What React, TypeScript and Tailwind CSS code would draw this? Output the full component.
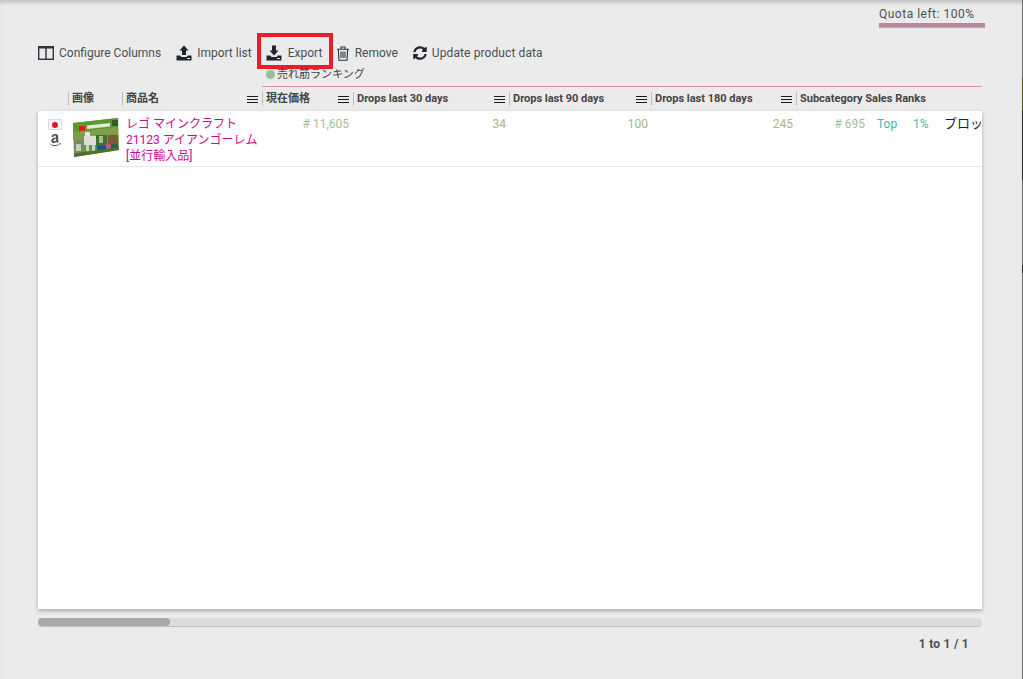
import type { ReactNode } from 'react';
import { FaAmazon, FaSyncAlt } from 'react-icons/fa';

const font = "font-['Roboto','Noto_Sans_CJK_JP',sans-serif]";

function ColumnsIcon() {
  return (
    <svg width="16" height="14" viewBox="0 0 16 14" fill="none" stroke="#2b3440" strokeWidth="1.4">
      <rect x="0.7" y="0.7" width="14.6" height="12.6" />
      <path d="M8 1v12M1 1.8h14" />
    </svg>
  );
}

function UploadIcon() {
  return (
    <svg width="16" height="16" viewBox="0 0 16 16" fill="#20262e">
      <path d="M8 0.5 12.5 5.5H10V10H6V5.5H3.5Z" />
      <path d="M0.5 10.5h3.8l1.2 1.5h5l1.2-1.5h3.8v5h-15Z" />
      <rect x="11" y="13" width="3" height="1" fill="#ebebeb" />
    </svg>
  );
}

function DownloadIcon() {
  return (
    <svg width="16" height="16" viewBox="0 0 16 16" fill="#20262e">
      <path d="M6 0.5h4V5.5h2.5L8 10.5 3.5 5.5H6Z" />
      <path d="M0.5 10.5h3.8l1.2 1.5h5l1.2-1.5h3.8v5h-15Z" />
      <rect x="11" y="13" width="3" height="1" fill="#ebebeb" />
    </svg>
  );
}

function TrashIcon() {
  return (
    <svg width="14" height="15" viewBox="0 0 14 15" fill="none" stroke="#2b3440" strokeWidth="1.1">
      <path d="M1 3.2h12M2.3 3.2l.6 11h8.2l.6-11M5 3V1h4v2" />
      <path d="M5 5.5v6.5M7 5.5v6.5M9 5.5v6.5" />
    </svg>
  );
}

function MenuIcon() {
  return (
    <svg width="11" height="9" viewBox="0 0 11 9" fill="none" stroke="#1c1c1c" strokeWidth="1">
      <path d="M0 1.5h11M0 4.5h11M0 7.5h11" />
    </svg>
  );
}

function LegoBox() {
  return (
    <svg width="48" height="42" viewBox="0 0 48 42">
      <path d="M1 5 46 0 47 32 2 39Z" fill="#6b9a33" />
      <path d="M1 5 46 0 46 9 1 14Z" fill="#5a9a2e" />
      <rect x="7" y="8" width="6" height="6" fill="#d3221c" />
      <path d="M15 7.5 38 5v3.5L15 11Z" fill="#e3ead8" />
      <rect x="40" y="2" width="6" height="6" fill="#2a5f27" />
      <path d="M1 14 46 9 46 17 1 22Z" fill="#7d9f4a" />
      <path d="M2 22h9v14l-9 2Z" fill="#7b8a5e" />
      <path d="M4 26h5v7H4Z" fill="#c9cdbf" />
      <path d="M13 14h5v5h-5Z" fill="#e6e6dc" />
      <path d="M12 18h12v9H12Z" fill="#dcddd2" />
      <path d="M14 27h3v6h-3ZM20 27h3v6h-3Z" fill="#cfd0c4" />
      <path d="M24 17h11v12H24Z" fill="#3f6e35" />
      <path d="M27 18h4v7h-4Z" fill="#a7c47a" />
      <path d="M25 28h9v6h-9Z" fill="#23508c" />
      <path d="M36 17h10v9H36Z" fill="#7a5b37" />
      <path d="M34 26h5v4h-5Z" fill="#b65a86" />
      <path d="M39 26h7v5h-7Z" fill="#2f5f48" />
      <path d="M2 35.5 47 29 47 32 2 39Z" fill="#4d7229" />
    </svg>
  );
}

function Tool({ icon, label, boxed, wide }: { icon: ReactNode; label: string; boxed?: boolean; wide?: boolean }) {
  return (
    <div
      className={
        boxed
          ? 'flex items-center gap-[6px] h-[36px] w-[76px] pl-[5px] pt-[4px] border-4 border-[#ed1c24] shrink-0'
          : 'flex items-center gap-[5px] h-[36px] pt-[4px] shrink-0'
      }
    >
      {icon}
      <span className={wide ? 'text-[12px] tracking-[0.1px] text-[#4a4f55] whitespace-nowrap' : 'text-[12px] text-[#4a4f55] whitespace-nowrap'}>
        {label}
      </span>
    </div>
  );
}

function HeaderCell({ label, width, menu }: { label: string; width: string; menu?: boolean }) {
  return (
    <div className={`${width} flex items-center h-[14px] border-l border-[#bdbdbd] pl-[3px] pr-[4px] shrink-0`}>
      <span className="flex-1 text-[11px] font-bold text-[#444] whitespace-nowrap">{label}</span>
      {menu && <MenuIcon />}
    </div>
  );
}

export default function App() {
  return (
    <div className={`${font} w-[1023px] h-[679px] overflow-hidden flex`}>
      <div className="w-[1022px] h-[679px] bg-[#ebebeb] flex flex-col shrink-0 shadow-[inset_0_5px_5px_-3px_rgba(0,0,0,0.22)]">
        <div className="flex justify-end pr-[37px] pt-[7px] h-[33px] shrink-0">
          <div className="w-[106px]">
            <div className="h-[16px] text-[12px] leading-[15px] tracking-[0.5px] text-[#4a4f55] whitespace-nowrap">Quota left: 100%</div>
            <div className="h-[4px] bg-[#b8879c] shadow-[0_1px_1px_rgba(0,0,0,0.25)]" />
          </div>
        </div>

        <div className="flex items-center pl-[38px] h-[36px] shrink-0">
          <Tool icon={<ColumnsIcon />} label="Configure Columns" />
          <div className="w-[15px]" />
          <Tool icon={<UploadIcon />} label="Import list" />
          <div className="w-[5px]" />
          <Tool icon={<DownloadIcon />} label="Export" boxed />
          <div className="w-[3px]" />
          <Tool icon={<TrashIcon />} label="Remove" />
          <div className="w-[15px]" />
          <Tool icon={<FaSyncAlt size={14} color="#20262e" />} label="Update product data" wide />
        </div>

        <div className="ml-[262px] mr-[40px] h-[18px] flex items-start gap-[2px] pl-[4px] border-b border-[#e58ab0] shrink-0">
          <span className="w-[9px] h-[9px] mt-[1px] rounded-full bg-[#95c199]" />
          <span className="text-[11px] leading-[12px] text-[#444] whitespace-nowrap">売れ筋ランキング</span>
        </div>

        <div className="flex items-center pl-[68px] h-[24px] shrink-0">
          <HeaderCell label="画像" width="w-[54px]" />
          <HeaderCell label="商品名" width="w-[140px]" menu />
          <HeaderCell label="現在価格" width="w-[91px]" menu />
          <HeaderCell label="Drops last 30 days" width="w-[156px]" menu />
          <HeaderCell label="Drops last 90 days" width="w-[142px]" menu />
          <HeaderCell label="Drops last 180 days" width="w-[145px]" menu />
          <HeaderCell label="Subcategory Sales Ranks" width="w-[186px]" />
        </div>

        <div className="mx-[38px] w-[944px] h-[498px] bg-white shadow-[0_2px_4px_rgba(0,0,0,0.28)] shrink-0 overflow-hidden">
          <div className="flex h-[56px] border-b border-[#e8e8e8] text-[12px] leading-[16px]">
            <div className="w-[34px] pl-[10px] pt-[8px] flex flex-col items-start shrink-0">
              <div className="w-[14px] h-[11px] bg-[#f6f6f6] border border-[#ddd] flex items-center justify-center">
                <span className="w-[6px] h-[6px] rounded-full bg-[#e8112d]" />
              </div>
              <FaAmazon size={14} color="#555" className="mt-[3px]" />
            </div>
            <div className="w-[54px] pt-[7px] shrink-0">
              <LegoBox />
            </div>
            <div className="w-[136px] pt-[5px] shrink-0 text-[#cc0a8c] whitespace-nowrap">
              <div>レゴ マインクラフト</div>
              <div>21123 アイアンゴーレム</div>
              <div>[並行輸入品]</div>
            </div>
            <div className="w-[92px] pt-[5px] pr-[5px] shrink-0 text-right text-[#9dbf9a]"># 11,605</div>
            <div className="w-[156px] pt-[5px] pr-[4px] shrink-0 text-right text-[#a9b878]">34</div>
            <div className="w-[142px] pt-[5px] pr-[4px] shrink-0 text-right text-[#a9b878]">100</div>
            <div className="w-[145px] pt-[5px] pr-[4px] shrink-0 text-right text-[#a9b878]">245</div>
            <div className="w-[68px] pt-[5px] shrink-0 text-right text-[#9dbf9a]"># 695</div>
            <div className="w-[36px] pl-[12px] pt-[5px] shrink-0 text-[#45b5b5]">Top</div>
            <div className="w-[43px] pl-[12px] pt-[5px] shrink-0 text-[#45b5b5]">1%</div>
            <div className="pt-[5px] text-[13px] text-[#222] whitespace-nowrap">ブロック</div>
          </div>
        </div>

        <div className="mx-[38px] mt-[9px] w-[944px] h-[9px] bg-[#dcdcdc] rounded-[4px] border-b border-[#b9c2c9] shrink-0">
          <div className="w-[132px] h-[8px] bg-[#a8a8a8] rounded-[4px]" />
        </div>

        <div className="mt-[8px] pr-[53px] text-right text-[12px] tracking-[0.25px] font-bold text-[#4a4f55]">1 to 1 / 1</div>
      </div>

      <div className="w-[1px] h-[679px] flex flex-col bg-[#707070] shrink-0">
        <div className="h-[77px] shrink-0" />
        <div className="h-[33px] bg-[#5f5520] shrink-0" />
        <div className="h-[70px] bg-[#2a2a2a] shrink-0" />
        <div className="h-[85px] shrink-0" />
        <div className="h-[8px] bg-[#2a2a2a] shrink-0" />
      </div>
    </div>
  );
}
